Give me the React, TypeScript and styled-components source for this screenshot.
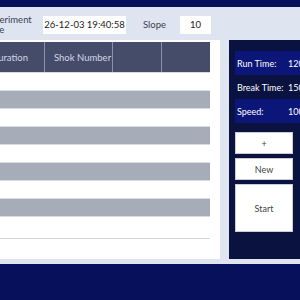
import React from "react";
import styled, { createGlobalStyle } from "styled-components";

const Global = createGlobalStyle`
  html, body { margin: 0; padding: 0; }
  body {
    width: 300px; height: 300px; overflow: hidden;
    background: #dfe4f1;
    font-family: "Lato", "Noto Sans", sans-serif;
  }
`;

const Page = styled.div`
  width: 420px;
  height: 300px;
  margin-left: -30px;
  display: flex;
  flex-direction: column;
  background: #dfe4f1;
`;

const TopBar = styled.div`
  height: 7px;
  background: #06105b;
`;

const Toolbar = styled.div`
  height: 33px;
  display: flex;
  align-items: center;
  padding-left: 14px;
  padding-top: 2px;
  box-sizing: border-box;
`;

const Label = styled.div<{ $w: number }>`
  width: ${(p) => p.$w}px;
  font-size: 9.5px;
  line-height: 10px;
  color: #3a3f4f;
  white-space: nowrap;
`;

const Field = styled.div<{ $w: number }>`
  width: ${(p) => p.$w}px;
  height: 18px;
  background: #ffffff;
  display: flex;
  align-items: center;
  justify-content: center;
  font-size: 9.5px;
  color: #222;
  white-space: nowrap;
  margin-right: 17px;
`;

const Main = styled.div`
  height: 219px;
  display: flex;
  gap: 9px;
`;

const TablePanel = styled.div`
  width: 250px;
  background: #ffffff;
  padding: 2px 10px 0 10px;
  box-sizing: border-box;
`;

const HeadRow = styled.div`
  display: grid;
  grid-template-columns: 64px 68px 49px 49px;
  height: 30px;
  background: #444c69;
`;

const HeadCell = styled.div`
  display: flex;
  align-items: center;
  padding-left: 9px;
  font-size: 9.5px;
  color: #d3d7e2;
  white-space: nowrap;
  border-left: 1px solid #8b91a6;
  &:first-child { border-left: none; padding-left: 11px; }
`;

const Body = styled.div`
  height: 166px;
  border-bottom: 1px solid #d3d6dd;
`;

const Row = styled.div<{ $alt: boolean }>`
  height: 18px;
  box-sizing: border-box;
  border-top: 1px solid #dadce3;
  background: ${(p) => (p.$alt ? "#a6acb8" : "#ffffff")};
`;

const Side = styled.div`
  width: 100px;
  background: #0a123f;
  padding: 11px 0 0 6px;
  box-sizing: border-box;
  display: flex;
  flex-direction: column;
`;

const Info = styled.div<{ $hl: boolean }>`
  height: 24px;
  display: flex;
  align-items: center;
  padding-left: 2px;
  background: ${(p) => (p.$hl ? "#0b1678" : "transparent")};
  color: #ffffff;
  font-size: 9px;
  white-space: nowrap;
`;

const InfoLabel = styled.span`
  width: 51px;
`;

const Buttons = styled.div`
  margin-top: 9px;
  display: flex;
  flex-direction: column;
  gap: 4px;
`;

const Button = styled.div<{ $h: number }>`
  width: 58px;
  height: ${(p) => p.$h}px;
  box-sizing: border-box;
  background: #ffffff;
  border: 1px solid #c9cdd8;
  display: flex;
  align-items: center;
  justify-content: center;
  font-size: 9px;
  color: #444;
`;

const Gap = styled.div`
  height: 5px;
`;

const BottomBar = styled.div`
  flex: 1;
  background: #06105b;
`;

export default function App() {
  const rows = Array.from({ length: 9 }, (_, i) => i % 2 === 1);
  return (
    <>
      <Global />
      <Page>
        <TopBar />
        <Toolbar>
          <Label $w={59}>
            Experiment
            <br />
            Date
          </Label>
          <Field $w={83}>26-12-03 19:40:58</Field>
          <Label $w={37}>Slope</Label>
          <Field $w={31}>10</Field>
        </Toolbar>
        <Main>
          <TablePanel>
            <HeadRow>
              <HeadCell>Duration</HeadCell>
              <HeadCell>Shok Number</HeadCell>
              <HeadCell />
              <HeadCell />
            </HeadRow>
            <Body>
              {rows.map((alt, i) => (
                <Row key={i} $alt={alt} />
              ))}
            </Body>
          </TablePanel>
          <Side>
            <Info $hl>
              <InfoLabel>Run Time:</InfoLabel>120
            </Info>
            <Info $hl={false}>
              <InfoLabel>Break Time:</InfoLabel>150
            </Info>
            <Info $hl>
              <InfoLabel>Speed:</InfoLabel>100
            </Info>
            <Buttons>
              <Button $h={22}>+</Button>
              <Button $h={22}>New</Button>
              <Button $h={48}>Start</Button>
            </Buttons>
          </Side>
        </Main>
        <Gap />
        <BottomBar />
      </Page>
    </>
  );
}
